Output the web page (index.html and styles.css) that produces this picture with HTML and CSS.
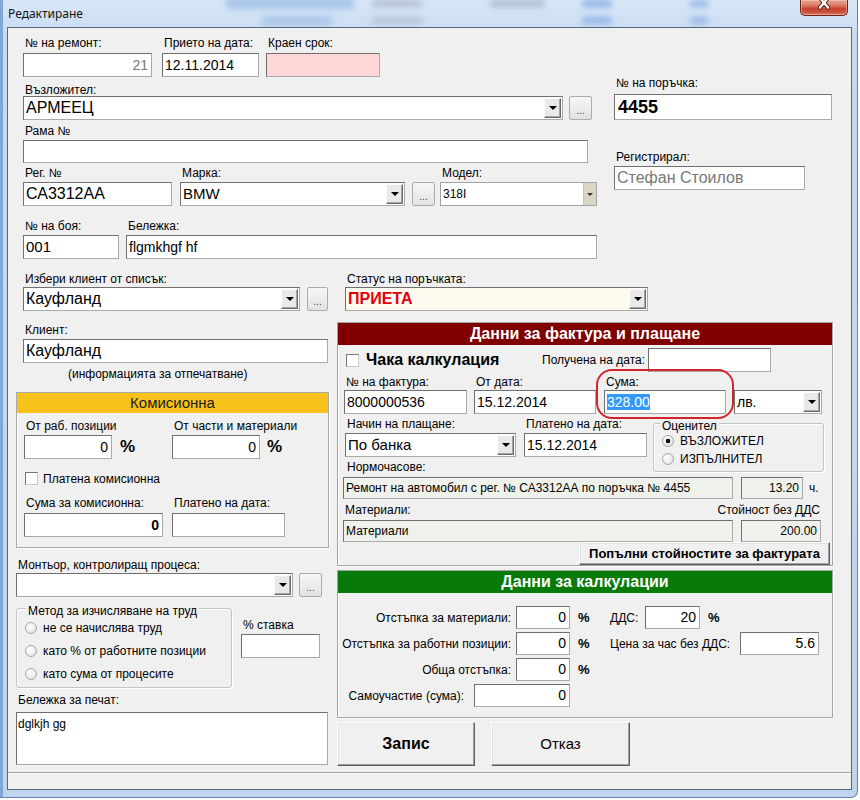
FILE: index.html
```html
<!DOCTYPE html>
<html lang="bg">
<head>
<meta charset="utf-8">
<title>Редактиране</title>
<link rel="stylesheet" href="styles.css">
</head>
<body>
<div class="window">
  <div class="titlebar">
    <div class="glass" aria-hidden="true">
      <i class="g1"></i><i class="g2"></i><i class="g3"></i><i class="g4"></i><i class="g5"></i><i class="g6"></i><i class="g7"></i><i class="g8"></i><i class="g9"></i>
    </div>
    <span class="title">Редактиране</span>
    <span class="close"><svg width="16" height="11" viewBox="0 0 16 11"><path d="M4 -2 L12 7.5 M12 -2 L4 7.5" stroke="#4a1a12" stroke-width="4.2" stroke-linecap="round"/><path d="M4 -2 L12 7.5 M12 -2 L4 7.5" stroke="#ffffff" stroke-width="2.4" stroke-linecap="round"/></svg></span>
  </div>
  <div class="frame">
    <div class="client">
      <div class="main">
        <div class="top">
          <div class="top-left">
            <div class="row r1">
              <div class="fld f-rem"><span class="lbl">№ на ремонт:</span><div class="box num gray">21</div></div>
              <div class="fld f-pri"><span class="lbl">Прието на дата:</span><div class="box">12.11.2014</div></div>
              <div class="fld f-kra"><span class="lbl">Краен срок:</span><div class="box pink"></div></div>
            </div>
            <div class="fld r2"><span class="lbl">Възложител:</span>
              <div class="line"><div class="combo c-vaz"><span class="v big">АРМЕЕЦ</span><span class="arrow"></span></div><span class="dots">...</span></div>
            </div>
            <div class="fld r3"><span class="lbl">Рама №</span><div class="box b-rama"></div></div>
            <div class="row r4">
              <div class="fld f-reg"><span class="lbl">Рег. №</span><div class="box big">СА3312АА</div></div>
              <div class="fld f-mar"><span class="lbl">Марка:</span>
                <div class="line"><div class="combo c-mar"><span class="v med">BMW</span><span class="arrow"></span></div><span class="dots">...</span></div>
              </div>
              <div class="fld f-mod"><span class="lbl">Модел:</span><div class="combo flat"><span class="v sm">318I</span><span class="arrow flat"></span></div></div>
            </div>
            <div class="row r5">
              <div class="fld f-boq"><span class="lbl">№ на боя:</span><div class="box med">001</div></div>
              <div class="fld f-bel"><span class="lbl">Бележка:</span><div class="box">flgmkhgf hf</div></div>
            </div>
          </div>
          <div class="top-right">
            <div class="fld f-por"><span class="lbl">№ на поръчка:</span><div class="box order">4455</div></div>
            <div class="fld f-regd"><span class="lbl">Регистрирал:</span><div class="box big gray">Стефан Стоилов</div></div>
          </div>
        </div>

        <div class="mid">
          <div class="col-left">
            <div class="fld f-cli"><span class="lbl">Избери клиент от списък:</span>
              <div class="line"><div class="combo c-cli"><span class="v big">Кауфланд</span><span class="arrow"></span></div><span class="dots">...</span></div>
            </div>
            <div class="fld f-klient"><span class="lbl">Клиент:</span><div class="box big">Кауфланд</div></div>
            <div class="info">(информацията за отпечатване)</div>
            <div class="kom">
              <div class="kom-head">Комисионна</div>
              <div class="kom-body">
                <div class="row k1">
                  <div class="fld k-a"><span class="lbl">От раб. позиции</span><div class="line"><div class="box num kb1">0</div><span class="pct">%</span></div></div>
                  <div class="fld k-b"><span class="lbl">От части и материали</span><div class="line"><div class="box num kb1">0</div><span class="pct">%</span></div></div>
                </div>
                <div class="chkrow"><span class="chk"></span><span>Платена комисионна</span></div>
                <div class="row k2">
                  <div class="fld k-c"><span class="lbl">Сума за комисионна:</span><div class="box num bold">0</div></div>
                  <div class="fld k-d"><span class="lbl">Платено на дата:</span><div class="box"></div></div>
                </div>
              </div>
            </div>
            <div class="fld f-mont"><span class="lbl">Монтьор, контролиращ процеса:</span>
              <div class="line"><div class="combo c-mont"><span class="v"></span><span class="arrow"></span></div><span class="dots">...</span></div>
            </div>
            <div class="method-row">
              <div class="group g-method"><span class="legend">Метод за изчисляване на труд</span>
                <div class="radrow"><span class="rad"></span>не се начислява труд</div>
                <div class="radrow"><span class="rad"></span>като % от работните позиции</div>
                <div class="radrow"><span class="rad"></span>като сума от процесите</div>
              </div>
              <div class="fld f-stavka"><span class="lbl">% ставка</span><div class="box"></div></div>
            </div>
            <div class="fld f-note"><span class="lbl">Бележка за печат:</span><div class="box area">dglkjh gg</div></div>
          </div>

          <div class="col-right">
            <div class="fld f-stat"><span class="lbl">Статус на поръчката:</span>
              <div class="combo c-stat"><span class="v status">ПРИЕТА</span><span class="arrow"></span></div>
            </div>
            <div class="panel inv">
              <div class="phead red">Данни за фактура и плащане</div>
              <div class="chaka-row">
                <div class="chaka"><span class="chk"></span><span class="chaka-t">Чака калкулация</span></div>
                <span class="pol-l">Получена на дата:</span><div class="box b-pol"></div>
              </div>
              <div class="row rB">
                <div class="fld fB1"><span class="lbl">№ на фактура:</span><div class="box">8000000536</div></div>
                <div class="fld fB2"><span class="lbl">От дата:</span><div class="box">15.12.2014</div></div>
                <div class="fld fB3"><span class="lbl">Сума:</span><div class="box"><span class="sel">328.00</span></div></div>
                <div class="combo c-cur"><span class="v">лв.</span><span class="arrow"></span></div>
              </div>
              <div class="rC">
                <div class="rC-left">
                  <div class="row">
                    <div class="fld fC1"><span class="lbl">Начин на плащане:</span><div class="combo"><span class="v med">По банка</span><span class="arrow"></span></div></div>
                    <div class="fld fC2"><span class="lbl">Платено на дата:</span><div class="box">15.12.2014</div></div>
                  </div>
                  <span class="lbl norm-l">Нормочасове:</span>
                </div>
                <div class="group g-oc"><span class="legend">Оценител</span>
                  <div class="radrow"><span class="rad on"></span>ВЪЗЛОЖИТЕЛ</div>
                  <div class="radrow"><span class="rad"></span>ИЗПЪЛНИТЕЛ</div>
                </div>
              </div>
              <div class="nrow">
                <div class="box gbox wide">Ремонт на автомобил с рег. № СА3312АА по поръчка № 4455</div>
                <div class="box gbox num n1">13.20</div><span class="unit">ч.</span>
              </div>
              <div class="mlab"><span>Материали:</span><span>Стойност без ДДС</span></div>
              <div class="nrow m">
                <div class="box gbox wide">Материали</div>
                <div class="box gbox num n2">200.00</div>
              </div>
              <div class="btn fill">Попълни стойностите за фактурата</div>
              <span class="ring"></span>
            </div>
            <div class="panel calc">
              <div class="phead green">Данни за калкулации</div>
              <div class="crow c1"><span class="cl">Отстъпка за материали:</span><div class="box num cin">0</div><span class="pct-s">%</span><span class="cl2 w35">ДДС:</span><div class="box num cin dds">20</div><span class="pct-s">%</span></div>
              <div class="crow"><span class="cl">Отстъпка за работни позиции:</span><div class="box num cin">0</div><span class="pct-s">%</span><span class="cl2 w130">Цена за час без ДДС:</span><div class="box num cin cena">5.6</div></div>
              <div class="crow"><span class="cl">Обща отстъпка:</span><div class="box num cin">0</div><span class="pct-s">%</span></div>
              <div class="crow"><span class="cl s">Самоучастие (сума):</span><div class="box num cin w96">0</div></div>
            </div>
            <div class="btns"><div class="btn save">Запис</div><div class="btn cancel">Отказ</div></div>
          </div>
        </div>
      </div>
      <div class="statusbar"></div>
    </div>
  </div>
</div>
</body>
</html>
```

FILE: styles.css
```css
* { box-sizing: border-box; margin: 0; padding: 0; }
html, body { width: 860px; height: 800px; overflow: hidden; background: #ffffff; }
body { font-family: "Liberation Sans", Arial, sans-serif; font-size: 12px; line-height: 14px; color: #000; }

/* window frame */
.window {
  width: 858px; height: 798px; display: flex; flex-direction: column;
  background: linear-gradient(180deg, #d8e7f7 0, #c5daf0 40px, #bfd5ee 100%);
  border-right: 1px solid #6283ad; border-bottom: 1px solid #6283ad;
  border-bottom-right-radius: 7px;
  box-shadow: inset 3px 0 0 #80a7d6;
}
.titlebar { position: relative; height: 27px; flex: none; display: flex; align-items: center; padding-left: 8px; }
.glass { position: absolute; left: 0; top: 0; right: 0; bottom: 0; overflow: hidden; }
.glass i { position: absolute; display: block; filter: blur(3px); border-radius: 2px; opacity: .8; }
.g1 { left: 226px; top: -3px; width: 128px; height: 12px; background: #9ebde6; }
.g2 { left: 262px; top: 16px; width: 70px; height: 10px; background: #a4c1e8; }
.g3 { left: 372px; top: 0; width: 50px; height: 7px; background: #a9b5c6; }
.g4 { left: 372px; top: 17px; width: 50px; height: 7px; background: #b0bccf; }
.g5 { left: 490px; top: 0; width: 55px; height: 7px; background: #a5b2c4; }
.g6 { left: 582px; top: 0; width: 30px; height: 7px; background: #7aa4e2; }
.g7 { left: 582px; top: 17px; width: 30px; height: 7px; background: #82a9e4; }
.g8 { left: 690px; top: 0; width: 18px; height: 7px; background: #82a9e4; }
.g9 { left: 690px; top: 17px; width: 18px; height: 7px; background: #8aaee6; }
.title { position: relative; font-family: "Noto Sans", "Open Sans", sans-serif; font-size: 12px; line-height: 16px; color: #141414; }
.close {
  position: relative; align-self: flex-start; margin-left: auto; margin-right: 9px;
  width: 48px; height: 16px; border: 1px solid #6e2519; border-top: none;
  border-radius: 0 0 5px 5px; display: flex; justify-content: center; overflow: hidden;
  background: linear-gradient(180deg, #e9a897 0, #dd7c66 35%, #c7432a 58%, #c9523b 80%, #d9795f 100%);
  box-shadow: inset 0 0 0 1px rgba(255, 215, 205, .45);
}
.close svg { display: block; }

.frame { flex: 1; display: flex; padding: 0 5px 7px 7px; }
.client { flex: 1; display: flex; flex-direction: column; border: 1px solid #56677c; background: #f0f0f0; }
.main { flex: 1; padding: 8px 0 0 15px; }
.statusbar { flex: none; height: 17px; border-top: 1px solid #a0a0a0; box-shadow: inset 0 1px 0 #fff; }

/* generic controls */
.fld { display: flex; flex-direction: column; }
.row { display: flex; align-items: flex-end; }
.line { display: flex; align-items: center; }
.lbl { display: block; height: 14px; line-height: 14px; white-space: nowrap; padding-left: 2px; margin-bottom: 3px; }
.box {
  display: block; height: 24px; background: #fff; border: 1px solid;
  border-color: #6f6f6f #a9a9a9 #a9a9a9 #6f6f6f;
  font-size: 14px; line-height: 22px; padding: 0 2px; white-space: nowrap; overflow: hidden;
}
.num { text-align: right; padding-right: 3px; }
.gray { color: #777; }
.pink { background: #ffd6d6; }
.big { font-size: 16px; }
.med { font-size: 15px; }
.sm { font-size: 12px; }
.bold { font-weight: bold; }
.combo { display: flex; height: 24px; background: #fff; border: 1px solid; border-color: #6f6f6f #a9a9a9 #a9a9a9 #6f6f6f; }
.combo .v { flex: 1; padding-left: 2px; line-height: 22px; font-size: 14px; white-space: nowrap; overflow: hidden; }
.combo .v.big { font-size: 16px; }
.combo .v.med { font-size: 15px; }
.combo .v.sm { font-size: 12px; }
.arrow {
  flex: none; width: 17px; margin: 1px; background: #e9e9e9; border: 1px solid;
  border-color: #fdfdfd #6a6a6a #6a6a6a #fdfdfd; box-shadow: inset -1px -1px 0 #a6a6a6;
  display: flex; align-items: center; justify-content: center;
}
.arrow::after { content: ""; border-left: 4px solid transparent; border-right: 4px solid transparent; border-top: 4px solid #000; }
.combo.flat { border: 1px solid #a3a3a3; }
.arrow.flat { width: 13px; margin: 0; border: none; border-left: 1px solid #c9c6b3; box-shadow: none; background: #dad6c3; }
.arrow.flat::after { border-left-width: 3px; border-right-width: 3px; border-top: 3px solid #333; }
.dots {
  flex: none; width: 23px; height: 24px; border: 1px solid #acacac; border-radius: 2px;
  background: linear-gradient(#f7f7f7, #e2e2e2); font-size: 10px; color: #444;
  text-align: center; padding-top: 8px; line-height: 12px;
}
.chk { display: inline-block; flex: none; width: 13px; height: 13px; background: #fff; border: 1px solid; border-color: #767676 #c8c8c8 #c8c8c8 #767676; }
.rad {
  display: inline-block; flex: none; width: 12px; height: 12px; border-radius: 50%;
  border: 1px solid #a9a9a9;
  background: radial-gradient(circle at 35% 35%, #fff 0, #f3f3f3 40%, #d5d5d5 100%);
}
.rad.on { background: radial-gradient(circle at 50% 50%, #111 0, #111 2px, transparent 2.6px), radial-gradient(circle at 35% 35%, #fff 0, #f3f3f3 40%, #d5d5d5 100%); }
.group { position: relative; border: 1px solid #c4c4c4; border-radius: 3px; box-shadow: inset 1px 1px 0 #fff, 1px 1px 0 #fff; }
.legend { position: absolute; top: -5px; background: #f0f0f0; padding: 0 2px; line-height: 14px; white-space: nowrap; }
.radrow { display: flex; align-items: center; height: 14px; gap: 6px; white-space: nowrap; }
.btn {
  display: flex; align-items: center; justify-content: center; background: #f0f0f0;
  border: 1px solid; border-color: #fff #5f5f5f #5f5f5f #fff;
  box-shadow: inset -1px -1px 0 #a0a0a0, inset 1px 1px 0 #e3e3e3; white-space: nowrap;
}

/* top section */
.top { display: flex; }
.top-left { width: 575px; flex: none; }
.top-right { width: 218px; margin-left: 16px; padding-top: 40px; flex: none; }
.f-rem { width: 129px; }
.f-pri { width: 97px; margin-left: 10px; }
.f-kra { width: 114px; margin-left: 7px; }
.r2 { margin-top: 6px; }
.r2 .lbl { margin-bottom: -1px; }
.c-vaz { width: 540px; }
.r2 .dots { margin-left: 6px; }
.r3 { margin-top: 4px; }
.r3 .lbl, .r4 .lbl, .r5 .lbl { margin-bottom: 2px; }
.b-rama { width: 565px; height: 23px; }
.r4 { margin-top: 3px; }
.f-reg { width: 149px; }
.f-mar { margin-left: 8px; }
.c-mar { width: 225px; }
.f-mar .dots { margin-left: 7px; }
.f-mod { width: 157px; margin-left: 5px; }
.r5 { margin-top: 13px; }
.f-boq { width: 96px; }
.f-bel { width: 471px; margin-left: 7px; }
.f-por .lbl { margin-bottom: 4px; }
.order { height: 26px; line-height: 24px; font-size: 18px; font-weight: bold; padding-left: 3px; }
.f-regd { margin-top: 30px; width: 191px; }
.f-regd .lbl { margin-bottom: 2px; }

/* middle */
.mid { display: flex; margin-top: 13px; }
.col-left { width: 307px; flex: none; }
.col-right { width: 496px; margin-left: 7px; flex: none; display: flex; flex-direction: column; }
.f-cli .lbl { margin-bottom: 1px; }
.c-cli { width: 277px; }
.f-cli .dots { margin-left: 7px; width: 21px; }
.f-klient { margin-top: 12px; width: 305px; }
.f-klient .lbl { margin-bottom: 2px; }
.info { margin-top: 4px; padding-left: 45px; height: 14px; white-space: nowrap; }
.kom { margin: 11px 0 0 -7px; width: 313px; border: 1px solid #a9a9a9; box-shadow: inset 1px 1px 0 #fff, 1px 1px 0 #fff; }
.kom-head { height: 20px; line-height: 20px; background: #f7c31b; text-align: center; font-size: 15px; color: #1a1a1a; }
.kom-body { padding: 0 0 10px 7px; }
.k1 { margin-top: 6px; }
.k1 .lbl { margin-bottom: 2px; }
.k-a { width: 148px; }
.kb1 { width: 88px; }
.pct { font-weight: bold; font-size: 17px; margin-left: 8px; }
.k-b .pct { margin-left: 7px; }
.chkrow { display: flex; align-items: center; height: 13px; margin: 13px 0 0 1px; gap: 5px; }
.k2 { margin-top: 11px; }
.k-c { width: 148px; }
.k-c .box { width: 139px; }
.k-d { width: 113px; }
.f-mont { margin: 10px 0 0 -7px; }
.f-mont .lbl { margin-bottom: 1px; }
.c-mont { width: 277px; }
.f-mont .dots { margin-left: 6px; }
.method-row { display: flex; margin: 11px 0 0 -7px; }
.g-method { width: 216px; height: 80px; padding: 12px 0 0 8px; }
.g-method .radrow + .radrow { margin-top: 9px; }
.g-method .legend { left: 9px; }
.f-stavka { margin-left: 9px; padding-top: 10px; width: 79px; }
.f-stavka .lbl { margin-bottom: 2px; }
.f-note { margin: 5px 0 0 -7px; width: 312px; }
.f-note .lbl { margin-bottom: 5px; }
.area { height: 53px; font-size: 12px; line-height: 16px; padding: 3px 1px; }

/* right column */
.f-stat { padding-left: 8px; }
.f-stat .lbl { margin-bottom: 1px; }
.c-stat { width: 303px; background: #fffaf0; }
.combo .v.status { color: #e2000e; font-weight: bold; font-size: 16px; }
.panel { position: relative; border: 1px solid #a3a3a3; box-shadow: inset 1px 1px 0 #fff, 1px 1px 0 #fff; display: flex; flex-direction: column; }
.inv { margin-top: 11px; }
.phead { height: 22px; line-height: 22px; text-align: center; color: #fff; font-weight: bold; font-size: 16px; }
.red { background: #800000; }
.green { background: #087a08; }
.chaka-row { display: flex; align-items: center; height: 24px; margin-top: 3px; padding-left: 8px; }
.chaka { width: 196px; display: flex; align-items: center; gap: 7px; }
.chaka-t { font-weight: bold; font-size: 16px; }
.pol-l { width: 106px; white-space: nowrap; }
.b-pol { width: 123px; }
.rB { margin-top: 3px; padding-left: 6px; }
.rB .lbl { margin-bottom: 1px; }
.fB1 { width: 123px; }
.fB2 { width: 122px; margin-left: 7px; }
.fB3 { width: 122px; margin-left: 8px; }
.c-cur { width: 88px; margin-left: 8px; }
.sel { display: inline-block; background: #3399ff; color: #fff; line-height: 16px; }
.rC { display: flex; margin-top: 3px; padding-left: 7px; }
.rC-left { width: 302px; }
.rC .lbl { margin-bottom: 2px; }
.fC1 { width: 171px; }
.fC2 { width: 123px; margin-left: 8px; }
.rC .norm-l { margin: 3px 0 0 0; }
.g-oc { width: 171px; height: 49px; margin: 6px 0 0 6px; padding: 10px 0 0 8px; }
.g-oc .radrow + .radrow { margin-top: 4px; }
.g-oc .legend { left: 6px; }
.nrow { display: flex; align-items: center; margin-top: 3px; padding-left: 5px; }
.gbox { height: 22px; line-height: 20px; background: #eef2ea; font-size: 12px; }
.wide { width: 390px; }
.n1 { width: 62px; margin-left: 8px; }
.n2 { width: 80px; margin-left: 8px; }
.unit { margin-left: 6px; }
.mlab { display: flex; justify-content: space-between; margin-top: 4px; padding: 0 12px 0 7px; height: 14px; }
.fill { align-self: flex-end; margin-right: 2px; width: 251px; height: 23px; font-weight: bold; font-size: 13px; }
.ring { position: absolute; left: 258px; top: 46px; width: 138px; height: 50px; border: 2px solid #d3242e; border-radius: 16px; }

.calc { margin-top: 4px; padding-bottom: 10px; }
.crow { display: flex; align-items: center; height: 23px; margin-top: 3px; }
.crow.c1 { margin-top: 13px; }
.cl { width: 178px; text-align: right; padding-right: 5px; white-space: nowrap; }
.cl.s { width: 136px; padding-right: 10px; }
.cin { width: 54px; height: 23px; line-height: 21px; }
.cin.w96 { width: 96px; }
.cin.dds { width: 55px; }
.cin.cena { width: 79px; }
.pct-s { margin-left: 8px; width: 14px; font-weight: bold; font-size: 13px; }
.cl2 { margin-left: 18px; white-space: nowrap; }
.cl2.w35 { width: 35px; }
.cl2.w130 { width: 130px; }
.btns { display: flex; margin-top: 4px; }
.save { width: 138px; height: 44px; font-weight: bold; font-size: 16px; }
.cancel { width: 139px; height: 44px; margin-left: 16px; font-size: 15px; }
```
